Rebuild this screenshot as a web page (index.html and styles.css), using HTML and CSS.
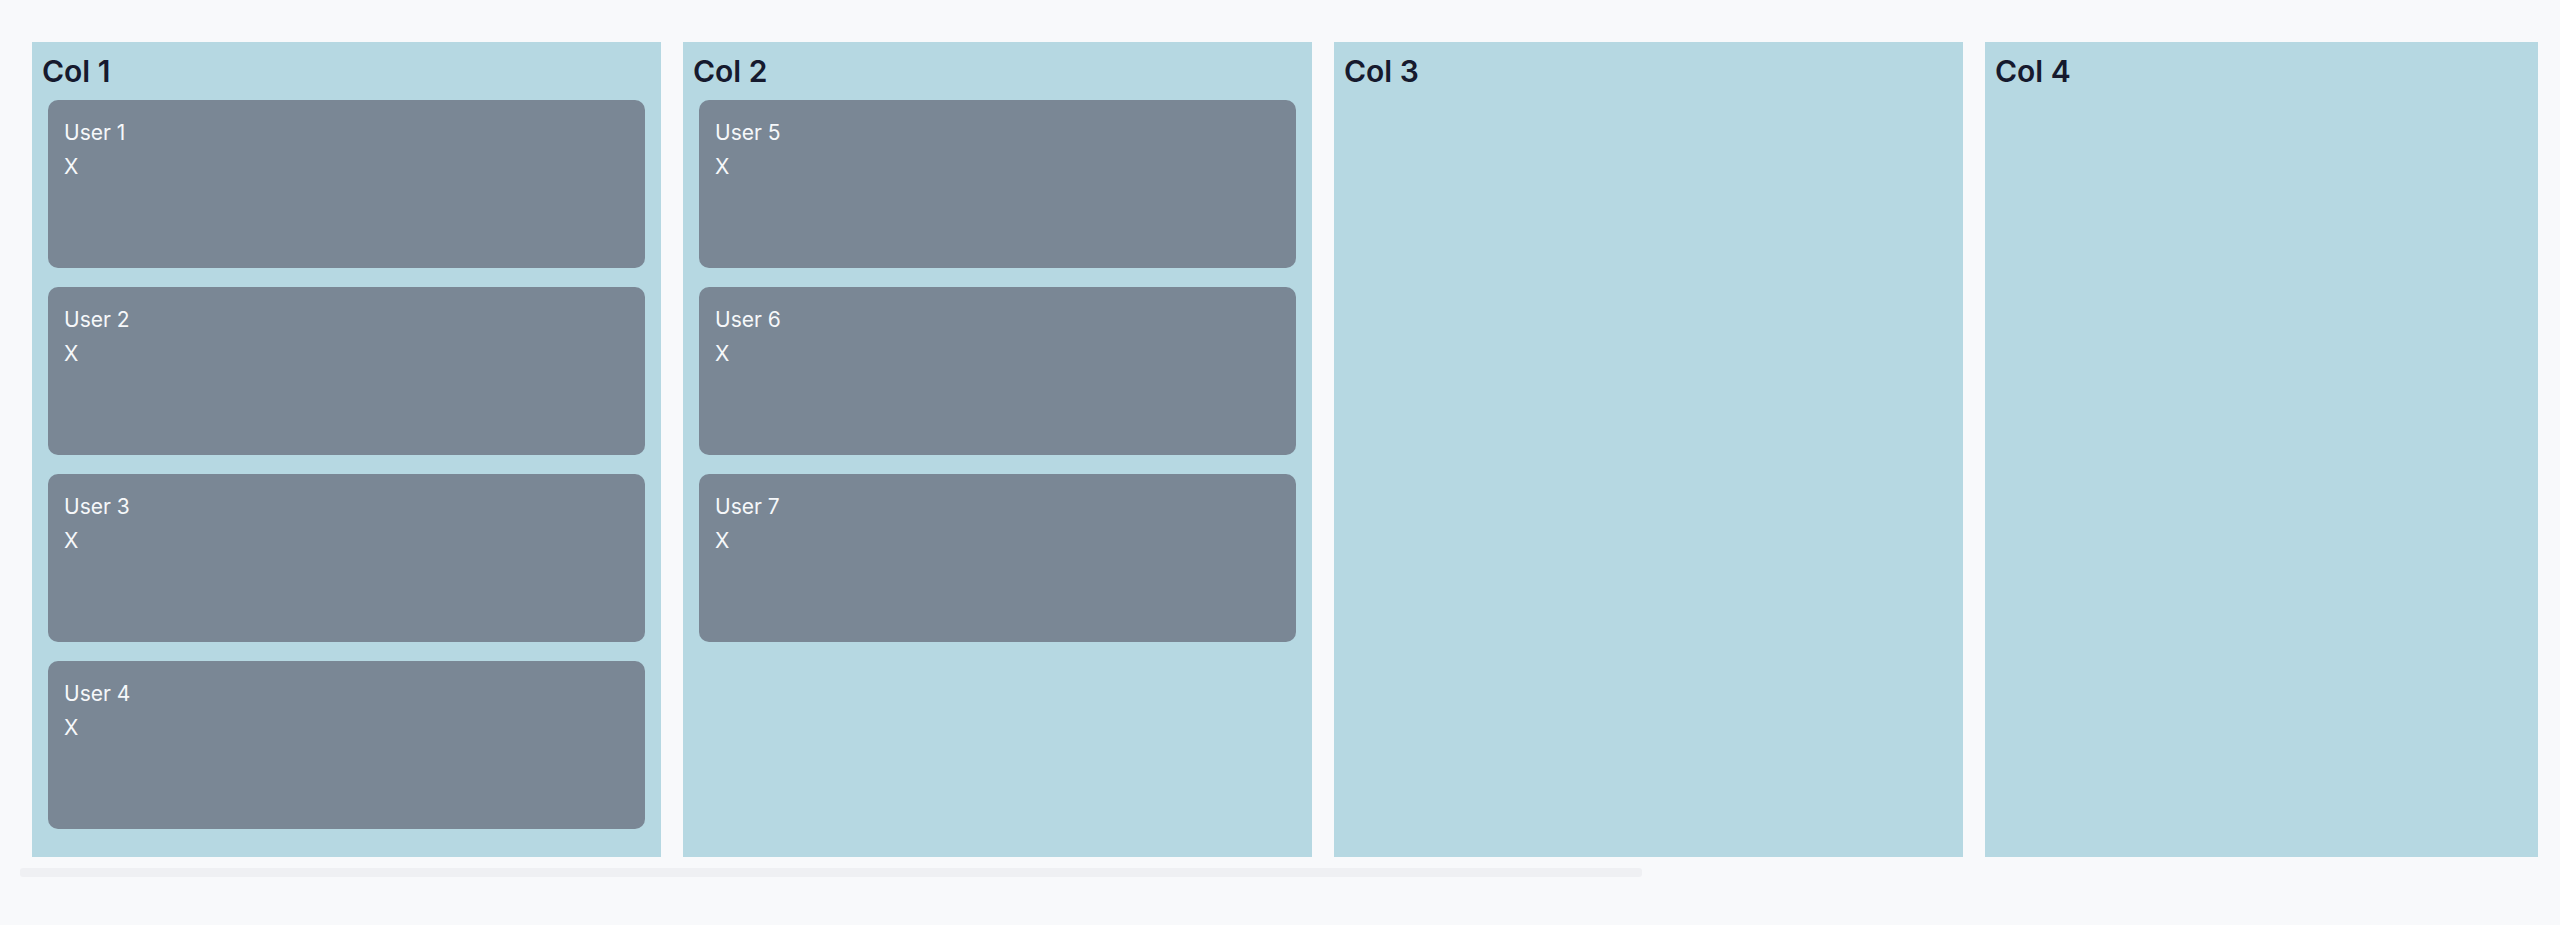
FILE: index.html
```html
<!DOCTYPE html>
<html lang="en">
<head>
    <meta charset="UTF-8">
    <meta name="viewport" content="width=device-width, initial-scale=1.0">
    <title>Board</title>
    <link rel="stylesheet" href="styles.css">
</head>
<body>
    <div class="page">
        <div class="board-wrap">
            <div class="board">
                <div class="column">
                    <h2 class="column-title">Col 1</h2>
                    <div class="card-list">
                        <div class="card"><p>User 1</p><p>X</p></div>
                        <div class="card"><p>User 2</p><p>X</p></div>
                        <div class="card"><p>User 3</p><p>X</p></div>
                        <div class="card"><p>User 4</p><p>X</p></div>
                    </div>
                </div>
                <div class="column">
                    <h2 class="column-title">Col 2</h2>
                    <div class="card-list">
                        <div class="card"><p>User 5</p><p>X</p></div>
                        <div class="card"><p>User 6</p><p>X</p></div>
                        <div class="card"><p>User 7</p><p>X</p></div>
                    </div>
                </div>
                <div class="column">
                    <h2 class="column-title">Col 3</h2>
                    <div class="card-list"></div>
                </div>
                <div class="column">
                    <h2 class="column-title">Col 4</h2>
                    <div class="card-list"></div>
                </div>
            </div>
        </div>
        <!-- horizontal scroll position of the board -->
        <div class="scrollbar">
            <div class="scrollbar-thumb" style="width: 64.4%;"></div>
        </div>
    </div>
</body>
</html>
```

FILE: styles.css
```css
body {
    margin: 0;
    background-color: #f8f9fb;
    font-family: Inter, "Open Sans", sans-serif;
}
.page {
    padding: 30px 22px 0 20px;
}
.board-wrap {
    padding: 12px 12px 11px;
    overflow: hidden;
}
.board {
    display: flex;
    align-items: stretch;
    gap: 22px;
}
.column {
    flex: 0 0 629px;
    box-sizing: border-box;
    padding: 9px 0 28px;
    background-color: #b6d8e2;
}
.column-title {
    margin: 0 0 9px;
    padding-left: 10px;
    font-size: 30px;
    line-height: 40px;
    font-weight: 600;
    color: #161a2e;
}
.card-list {
    display: flex;
    flex-direction: column;
    gap: 19px;
    padding: 0 16px;
}
.card {
    min-height: 168px;
    box-sizing: border-box;
    padding: 16px;
    background-color: #7a8795;
    border-radius: 10px;
    color: #f6f8fa;
}
.card p {
    margin: 0;
    font-size: 21px;
    line-height: 34px;
}
.scrollbar {
    height: 9px;
}
.scrollbar-thumb {
    height: 100%;
    background-color: #eff0f3;
    border-radius: 3px;
}
```
